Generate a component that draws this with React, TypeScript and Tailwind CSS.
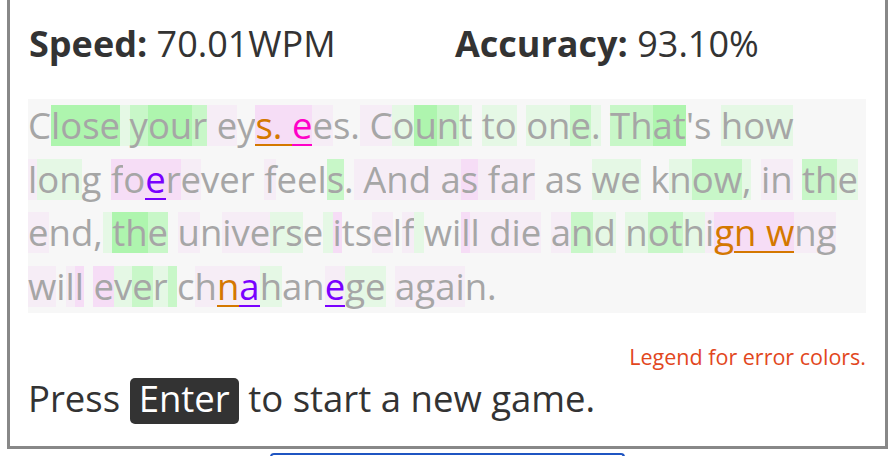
import React from "react";

const BG: Record<string, string> = {
  ".": "",
  G: "bg-[#aef5ae]",
  g: "bg-[#c8f7c8]",
  l: "bg-[#e5f8e5]",
  P: "bg-[#f6ddf6]",
  p: "bg-[#f6edf6]",
};

const ERR: Record<string, string> = {
  ".": "",
  o: "text-[#d47800] shadow-[inset_0_-2px_0_#d47800]",
  O: "text-[#d47800]",
  m: "text-[#ff00c8] shadow-[inset_0_-2px_0_#ff00c8]",
  u: "text-[#7a00ff] shadow-[inset_0_-2px_0_#7a00ff]",
};

function errs(len: number, marks: Record<number, string>) {
  const a: string[] = [];
  for (let i = 0; i < len; i++) a.push(marks[i] ?? ".");
  return a.join("");
}

const LINES = [
  {
    text: "Close your eys. ees. Count to one. That's how",
    bg: ".GGGGlgGGgpp.PPPPp..pplGgl.ll.llgl.ggGG...lll",
    err: errs(45, { 13: "o", 14: "o", 15: "o", 16: "m" }),
  },
  {
    text: "long foerever feels. And as far as we know, in the",
    bg: "pll." + "." + "PPPPp..." + "." + "p...g." + "p" + "ppp" + "p" + "pP" + "p" + "ppp" + "." + ".." + "." + "ll" + "." + ".lggl" + "." + "pp" + "." + "ggl",
    err: errs(50, { 7: "u" }),
  },
  {
    text: "end, the universe itself will die and nothign wng",
    bg: "p..." + "l" + "GGg" + "." + "p.pppll." + "l" + "P..p.p" + "l" + "..Pp" + "p" + "ppp" + "." + "pgl" + "." + "lgglpPP" + "P" + "Ppp",
    err: errs(49, { 43: "O", 44: "o", 45: "o", 46: "o" }),
  },
  {
    text: "will ever chnahanege again.",
    bg: "p.pP" + "." + "Plgl" + "g" + ".pppl..pll" + "." + "pppp..",
    err: errs(27, { 12: "o", 13: "u", 17: "u" }),
  },
];

function Line({ text, bg, err }: { text: string; bg: string; err: string }) {
  return (
    <div className="h-[53.5px] leading-[53.5px] whitespace-nowrap">
      {text.split("").map((ch, i) => (
        <span
          key={i}
          className={`inline-block h-[41px] leading-[41px] whitespace-pre ${BG[bg[i]] ?? ""} ${ERR[err[i]] ?? ""}`}
        >
          {ch}
        </span>
      ))}
    </div>
  );
}

export default function App() {
  return (
    <div className="w-[895px] h-[456px] overflow-hidden bg-white font-['Open_Sans',sans-serif]">
      <div className="mx-[7px] border-x-[3px] border-b-[3px] border-[#888888] pl-[18px] pr-[19px] pt-[17px] pb-[20px]">
        <div className="flex h-[54px] leading-[54px] text-[36px] text-[#333333] whitespace-nowrap">
          <div className="w-[427px] pl-[1px]">
            <span className="font-bold">Speed:</span> 70.01WPM
          </div>
          <div>
            <span className="font-bold">Accuracy:</span> 93.10%
          </div>
        </div>
        <div className="mt-[28px] bg-[#f7f7f7] text-[36.5px] text-[#a6a6a6]">
          {LINES.map((l, i) => (
            <Line key={i} {...l} />
          ))}
        </div>
        <div className="mt-[29px] text-right text-[21.5px] leading-[30px] text-[#e2471d]">
          Legend for error colors.
        </div>
        <div className="text-[36.5px] leading-[53.5px] text-[#333333] whitespace-nowrap">
          Press{" "}
          <kbd className="inline-block leading-[40px] pb-[6px] px-[9px] rounded-[5px] bg-[#333333] text-white font-['Open_Sans',sans-serif]">
            Enter
          </kbd>{" "}
          to start a new game.
        </div>
      </div>
      <div className="mx-auto mt-[4px] w-[355px] h-[4px] border-t-2 border-x-2 border-[#1f55c2] rounded-t-[6px]" />
    </div>
  );
}
